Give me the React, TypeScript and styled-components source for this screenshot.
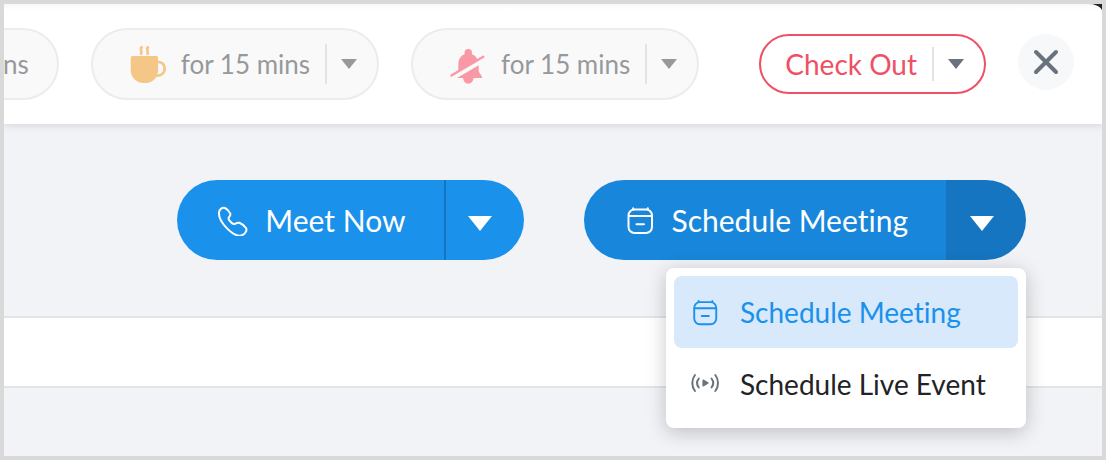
import React from "react";
import styled, { createGlobalStyle } from "styled-components";

const GlobalStyle = createGlobalStyle`
  *, *::before, *::after { box-sizing: border-box; }
  body {
    margin: 0;
    font-family: Lato, "Liberation Sans", sans-serif;
    font-variant-ligatures: none;
  }
  button {
    font: inherit;
    font-variant-ligatures: inherit;
    color: inherit;
    border: 0;
    margin: 0;
    padding: 0;
    background: none;
    cursor: pointer;
  }
  svg { display: block; flex: none; }
`;

const Frame = styled.div`
  display: flex;
  min-height: 100vh;
  border: 4px solid #d9d9d9;
  background: #222326;
  overflow: hidden;
`;

const Panel = styled.div`
  flex: 1;
  min-width: 0;
  background: #f2f3f7;
  border-top-right-radius: 14px 8px;
  overflow: hidden;
`;

const Header = styled.header`
  position: relative;
  display: flex;
  align-items: center;
  justify-content: flex-end;
  gap: 60px;
  height: 120px;
  padding-right: 28px;
  background: linear-gradient(#f8f8f8, #fff 6px);
  box-shadow: 0 1px 8px rgba(40, 40, 50, 0.16);
`;

const StatusGroup = styled.div`
  display: flex;
  flex: none;
  gap: 32px;
`;

const SessionGroup = styled.div`
  display: flex;
  flex: none;
  align-items: flex-start;
  gap: 32px;
`;

const Pill = styled.div<{ $outlined?: boolean }>`
  display: flex;
  flex: none;
  align-items: center;
  height: ${(p) => (p.$outlined ? 60 : 72)}px;
  border: 2px solid ${(p) => (p.$outlined ? "#ef5064" : "#ececed")};
  border-radius: 36px;
  background: ${(p) => (p.$outlined ? "#fff" : "#f9f9fa")};
  color: ${(p) => (p.$outlined ? "#ef5064" : "#97989a")};
  font-size: ${(p) => (p.$outlined ? 28 : 26)}px;
  line-height: 36px;
  white-space: nowrap;
`;

const PillAction = styled.button<{ $inset: number; $end?: number }>`
  display: flex;
  align-items: center;
  gap: 12px;
  height: 100%;
  padding: 0 ${(p) => p.$end ?? 15}px 0 ${(p) => p.$inset}px;
`;

const Divider = styled.span<{ $short?: boolean }>`
  width: 2px;
  height: ${(p) => (p.$short ? 34 : 40)}px;
  background: #e2e3e5;
`;

const PillToggle = styled.button<{ $active?: boolean }>`
  height: 100%;
  padding: 0 20px 0 14px;
  color: ${(p) => (p.$active ? "#69737e" : "#97989a")};
`;

const CloseButton = styled.button`
  display: grid;
  place-items: center;
  width: 56px;
  height: 56px;
  border-radius: 50%;
  background: #f7f8fa;
  color: #69737e;
`;

const Actions = styled.div`
  display: flex;
  justify-content: flex-end;
  gap: 60px;
  padding: 56px 76px;
`;

const Split = styled.div`
  position: relative;
  display: flex;
  flex: none;
  height: 80px;
  color: #fff;
`;

const SplitMain = styled.button<{ $open?: boolean }>`
  display: flex;
  align-items: center;
  gap: 16px;
  padding: 0 38px 0 40px;
  border-radius: 40px 0 0 40px;
  background: ${(p) => (p.$open ? "#1886da" : "#1a91eb")};
  font-size: 30px;
  line-height: 36px;
  white-space: nowrap;
`;

const SplitToggle = styled.button<{ $open?: boolean }>`
  padding: 6px 32px 0 22px;
  border-left: 2px solid #1675c0;
  border-radius: 0 40px 40px 0;
  background: ${(p) => (p.$open ? "#1675c0" : "#1a91eb")};
`;

const Menu = styled.div`
  position: absolute;
  z-index: 1;
  top: calc(100% + 8px);
  right: 0;
  width: 360px;
  padding: 8px;
  border-radius: 8px;
  background: #fff;
  box-shadow: 0 4px 20px rgba(0, 0, 0, 0.22);
`;

const MenuItem = styled.button<{ $selected?: boolean }>`
  display: flex;
  align-items: center;
  gap: 20px;
  width: 100%;
  height: 72px;
  padding: 0 16px;
  border-radius: 8px;
  background: ${(p) => (p.$selected ? "#d7e9fb" : "#fff")};
  color: ${(p) => (p.$selected ? "#1a91eb" : "#222326")};
  font-size: 28px;
  line-height: 36px;
  white-space: nowrap;
`;

const Strip = styled.div`
  height: 72px;
  border: solid #e3e4e6;
  border-width: 2px 0;
  background: #fff;
`;

const Caret = ({ width, height }: { width: number; height: number }) => (
  <svg width={width} height={height} viewBox="0 0 24 15" preserveAspectRatio="none" fill="currentColor" aria-hidden="true">
    <path d="M0 0h24L12 15z" />
  </svg>
);

const CupIcon = () => (
  <svg width="40" height="40" viewBox="0 0 40 40" fill="none" stroke="#f4c787" aria-hidden="true">
    <path
      d="M3.4 12h24a1.7 1.7 0 0 1 1.7 1.7V26c0 7.5-5.5 13-12 13h-3C7.5 39 1.7 33.5 1.7 26V13.7A1.7 1.7 0 0 1 3.4 12z"
      fill="#f4c787"
      stroke="none"
    />
    <path d="M28.5 18c4.5-.3 7.2 2.7 7.2 6.7 0 4.300-3.200 7.300-8.700 7" strokeWidth="2.7" />
    <path d="M12.600 3.200c-2.400 2.600.8 3.600-.4 6.600M18.900 3.200c-2.400 2.600.8 3.600-.4 6.600" strokeWidth="2.800" strokeLinecap="round" />
  </svg>
);

const BellOffIcon = () => (
  <svg width="40" height="40" viewBox="0 0 40 40" fill="#f899a5" aria-hidden="true">
    <circle cx="19.3" cy="8.7" r="3.7" />
    <path d="M9.3 27.500V20c0-6 4.200-10.500 10-10.500 4 0 7.400 2.200 9.200 6.200z" />
    <path d="M2.400 31.500L34.300 12.700" stroke="#f899a5" strokeWidth="2.4" strokeLinecap="round" />
    <path d="M8 34l21.700-12.700v6.200l3.300 5.200V34h-8.500c-.3 3.500-2.300 5.600-5.200 5.600s-4.900-2.100-5.200-5.600z" />
  </svg>
);

const CloseIcon = () => (
  <svg width="28" height="28" viewBox="0 0 28 28" fill="none" stroke="currentColor" strokeWidth="4" strokeLinecap="round" aria-hidden="true">
    <path d="M4 4l20 20M24 4L4 24" />
  </svg>
);

const PhoneIcon = () => (
  <svg width="32" height="32" viewBox="0 0 32 32" fill="none" stroke="currentColor" strokeWidth="2" strokeLinejoin="round" aria-hidden="true">
    <path d="M2 8.500C2.300 5 5.500 3 8 4c2.200 1 4.300 3.500 5.300 5.700.6 1.600-.6 2.600-1.600 4-.7 1.300.2 2.400 1.800 4.100s3 2.700 4.400 2c1.600-.8 2.800-1.600 4.500-1 2.300.9 5 3 6.600 5.200 1.200 2-.2 5.400-3.400 7-4 1.800-10.200-1.200-15.600-6.600C5 19.300 1.500 13.500 2 8.500z" />
  </svg>
);

const CalendarIcon = ({ size }: { size: number }) => (
  <svg width={size} height={size} viewBox="0 0 32 32" fill="none" stroke="currentColor" strokeWidth="2" strokeLinecap="round" aria-hidden="true">
    <rect x="4.500" y="5.500" width="23.500" height="23.500" rx="6" />
    <path d="M5 12h22.500M12.500 20.300h7.500M9.200 4.300v1.200M23.800 4.300v1.200" />
  </svg>
);

const LiveIcon = () => (
  <svg width="30" height="30" viewBox="0 0 30 30" fill="none" stroke="#69737e" strokeWidth="2" strokeLinecap="round" aria-hidden="true">
    <path d="M5 6c-3.600 4.500-3.600 11.500 0 16M8.800 9.500c-2.200 2.800-2.200 6.200 0 9M25.300 6c3.600 4.500 3.600 11.500 0 16M21.500 9.500c2.200 2.800 2.200 6.200 0 9" />
    <path d="M13.400 11.500l4.200 2.500-4.200 2.500z" fill="#69737e" strokeLinejoin="round" />
  </svg>
);

const StatusPill = ({ icon, label }: { icon: React.ReactNode; label: string }) => (
  <Pill>
    <PillAction type="button" $inset={36}>
      {icon}
      {label}
    </PillAction>
    <Divider />
    <PillToggle type="button" aria-label="Change duration">
      <Caret width={16} height={10} />
    </PillToggle>
  </Pill>
);

export default function App() {
  return (
    <Frame>
      <GlobalStyle />
      <Panel>
        <Header>
          <StatusGroup>
            <Pill>
              <PillAction type="button" $inset={36} $end={28}>
                ns
              </PillAction>
            </Pill>
            <StatusPill icon={<CupIcon />} label="for 15 mins" />
            <StatusPill icon={<BellOffIcon />} label="for 15 mins" />
          </StatusGroup>
          <SessionGroup>
            <Pill $outlined>
              <PillAction type="button" $inset={24}>
                Check Out
              </PillAction>
              <Divider $short />
              <PillToggle type="button" $active aria-label="Check out options">
                <Caret width={16} height={10} />
              </PillToggle>
            </Pill>
            <CloseButton type="button" aria-label="Close">
              <CloseIcon />
            </CloseButton>
          </SessionGroup>
        </Header>
        <main>
          <Actions>
            <Split>
              <SplitMain type="button">
                <PhoneIcon />
                Meet Now
              </SplitMain>
              <SplitToggle type="button" aria-label="Meet now options">
                <Caret width={24} height={15} />
              </SplitToggle>
            </Split>
            <Split>
              <SplitMain type="button" $open>
                <CalendarIcon size={32} />
                Schedule Meeting
              </SplitMain>
              <SplitToggle type="button" $open aria-label="Schedule options" aria-haspopup="menu" aria-expanded="true">
                <Caret width={24} height={15} />
              </SplitToggle>
              <Menu role="menu">
                <MenuItem type="button" role="menuitem" $selected>
                  <CalendarIcon size={30} />
                  Schedule Meeting
                </MenuItem>
                <MenuItem type="button" role="menuitem">
                  <LiveIcon />
                  Schedule Live Event
                </MenuItem>
              </Menu>
            </Split>
          </Actions>
          <Strip />
        </main>
      </Panel>
    </Frame>
  );
}
